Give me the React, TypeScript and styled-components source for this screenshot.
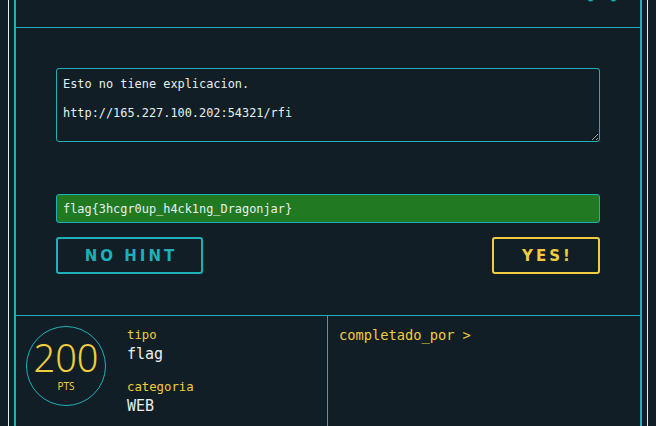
import React from 'react';
import styled, { createGlobalStyle } from 'styled-components';

const colors = {
  bg: '#121e25',
  cyan: '#1eb0b8',
  light: '#d9f6fa',
  text: '#e4f1f2',
  yellow: '#f0cd40',
  green: '#217a21',
};

const mono = `'DejaVu Sans Mono', 'Liberation Mono', monospace`;

const GlobalStyle = createGlobalStyle`
  html, body {
    margin: 0;
    padding: 0;
    background: ${colors.bg};
    height: 100%;
    overflow: hidden;
  }
  #root {
    height: 100%;
  }
`;

const Frame = styled.div`
  margin: 0 8px;
  height: 100%;
  border-left: 1px solid ${colors.light};
  border-right: 1px solid ${colors.light};
  padding: 0 5px;
  box-sizing: border-box;
`;

const Card = styled.div`
  height: 100%;
  border-left: 2px solid ${colors.cyan};
  border-right: 2px solid ${colors.cyan};
  display: flex;
  flex-direction: column;
`;

// the page is scrolled: only the tails of the title show above the rule
const Header = styled.div`
  flex-shrink: 0;
  height: 27px;
  border-bottom: 1px solid ${colors.cyan};
  display: flex;
  align-items: flex-end;
  justify-content: space-between;
  padding: 0 20px 0 44px;
  overflow: hidden;
`;

const Title = styled.span`
  font-family: 'Liberation Sans', Arial, sans-serif;
  font-size: 24px;
  line-height: 24px;
  margin-bottom: 29px;
  color: ${colors.text};
  white-space: nowrap;
`;

const TitleAccent = styled.span`
  color: ${colors.yellow};
`;

const Close = styled.span`
  font-family: ${mono};
  font-size: 20px;
  line-height: 20px;
  margin-bottom: 25px;
  color: ${colors.cyan};
`;

const Body = styled.div`
  flex-shrink: 0;
  padding: 40px 40px 41px;
  display: flex;
  flex-direction: column;
  border-bottom: 1px solid ${colors.cyan};
`;

const Description = styled.textarea`
  height: 74px;
  box-sizing: border-box;
  background: transparent;
  border: 1px solid ${colors.cyan};
  border-radius: 3px;
  padding: 8px 6px 4px;
  margin: 0;
  color: ${colors.text};
  font-family: ${mono};
  font-size: 11.9px;
  line-height: 14.5px;
  resize: vertical;
  outline: none;
`;

const FlagInput = styled.input`
  margin-top: 52px;
  height: 29px;
  box-sizing: border-box;
  background: ${colors.green};
  border: 1px solid ${colors.cyan};
  border-radius: 3px;
  padding: 0 6px;
  color: ${colors.text};
  font-family: ${mono};
  font-size: 11.9px;
  outline: none;
`;

const Actions = styled.div`
  margin-top: 14px;
  display: flex;
  justify-content: space-between;
`;

const ActionButton = styled.button<{ tone: string; w: number }>`
  width: ${(p) => p.w}px;
  height: 37px;
  background: transparent;
  border: 2px solid ${(p) => p.tone};
  border-radius: 3px;
  color: ${(p) => p.tone};
  font-family: 'DejaVu Sans', 'Liberation Sans', sans-serif;
  font-weight: bold;
  font-size: 15px;
  letter-spacing: 3px;
  padding: 0 0 0 3px;
  cursor: pointer;
`;

const Footer = styled.div`
  flex: 1;
  display: grid;
  grid-template-columns: 312px 1fr;
`;

const InfoCell = styled.div`
  border-right: 1px solid ${colors.cyan};
  padding: 10px;
  display: flex;
  gap: 21px;
`;

const Points = styled.div`
  width: 78px;
  height: 78px;
  flex-shrink: 0;
  border: 1px solid ${colors.cyan};
  border-radius: 50%;
  display: flex;
  flex-direction: column;
  align-items: center;
  justify-content: center;
  color: ${colors.yellow};
  font-family: 'Noto Sans', 'DejaVu Sans', sans-serif;
`;

const PointsValue = styled.span`
  font-size: 38px;
  font-weight: 300;
  line-height: 40px;
  margin-top: -4px;
`;

const PointsUnit = styled.span`
  font-size: 10px;
  line-height: 12px;
  margin-top: 3px;
`;

const Meta = styled.div`
  display: flex;
  flex-direction: column;
  padding-top: 1px;
`;

const MetaLabel = styled.span<{ gap?: number }>`
  font-family: ${mono};
  font-size: 12.3px;
  line-height: 16px;
  color: ${colors.yellow};
  margin-top: ${(p) => p.gap ?? 0}px;
`;

const MetaValue = styled.span`
  font-family: ${mono};
  font-size: 15px;
  line-height: 22px;
  color: ${colors.text};
`;

const SolversCell = styled.div`
  padding: 11px 11px;
  font-family: ${mono};
  font-size: 13.7px;
  color: ${colors.yellow};
`;

const App: React.FC = () => (
  <>
    <GlobalStyle />
    <Frame>
      <Card>
        <Header>
          <Title>
            Explicacion_rfi_<TitleAccent>y</TitleAccent>_dragonjar
          </Title>
          <Close>[x]</Close>
        </Header>
        <Body>
          <Description
            readOnly
            defaultValue={'Esto no tiene explicacion.\n\nhttp://165.227.100.202:54321/rfi'}
          />
          <FlagInput readOnly value="flag{3hcgr0up_h4ck1ng_Dragonjar}" />
          <Actions>
            <ActionButton tone={colors.cyan} w={147}>
              NO HINT
            </ActionButton>
            <ActionButton tone={colors.yellow} w={108}>
              YES!
            </ActionButton>
          </Actions>
        </Body>
        <Footer>
          <InfoCell>
            <Points>
              <PointsValue>200</PointsValue>
              <PointsUnit>PTS</PointsUnit>
            </Points>
            <Meta>
              <MetaLabel>tipo</MetaLabel>
              <MetaValue>flag</MetaValue>
              <MetaLabel gap={14}>categoria</MetaLabel>
              <MetaValue>WEB</MetaValue>
            </Meta>
          </InfoCell>
          <SolversCell>completado_por &gt;</SolversCell>
        </Footer>
      </Card>
    </Frame>
  </>
);

export default App;
